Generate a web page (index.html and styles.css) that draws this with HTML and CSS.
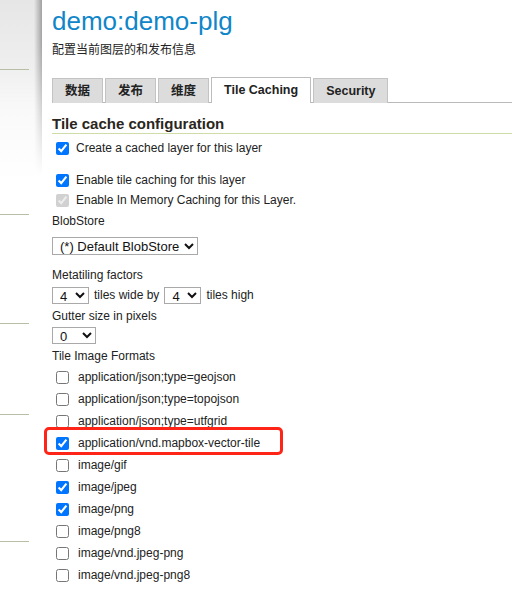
FILE: index.html
```html
<!DOCTYPE html>
<html lang="zh">
<head>
<meta charset="utf-8">
<title>demo:demo-plg</title>
<link rel="stylesheet" href="styles.css">
</head>
<body>
<div class="page">
  <aside class="sidebar">
    <div class="nav-group g1"></div>
    <div class="nav-group g2"></div>
    <div class="nav-group g3"></div>
    <div class="nav-group g4"></div>
    <div class="nav-group g5"></div>
  </aside>
  <main class="content">
    <h1 class="title">demo:demo-plg</h1>
    <p class="subtitle">配置当前图层的和发布信息</p>
    <ul class="tabs">
      <li class="tab">数据</li>
      <li class="tab">发布</li>
      <li class="tab">维度</li>
      <li class="tab active">Tile Caching</li>
      <li class="tab">Security</li>
    </ul>
    <h2 class="section-title">Tile cache configuration</h2>
    <div class="form">
      <label class="row r-create"><input type="checkbox" checked><span>Create a cached layer for this layer</span></label>
      <label class="row r-enable"><input type="checkbox" checked><span>Enable tile caching for this layer</span></label>
      <label class="row r-memory"><input type="checkbox" checked disabled><span>Enable In Memory Caching for this Layer.</span></label>
      <div class="row r-label">BlobStore</div>
      <div class="row r-blob">
        <select class="sel sel-blob"><option>(*) Default BlobStore</option></select>
      </div>
      <div class="row r-label r-meta">Metatiling factors</div>
      <div class="row r-factors">
        <select class="sel sel-meta"><option>4</option></select>
        <span class="inline-text">tiles wide by</span>
        <select class="sel sel-meta"><option>4</option></select>
        <span class="inline-text">tiles high</span>
      </div>
      <div class="row r-label">Gutter size in pixels</div>
      <div class="row r-gutter">
        <select class="sel sel-gutter"><option>0</option></select>
      </div>
      <div class="row r-label r-formats">Tile Image Formats</div>
      <ul class="formats">
        <li><label class="fmt"><input type="checkbox"><span>application/json;type=geojson</span></label></li>
        <li><label class="fmt"><input type="checkbox"><span>application/json;type=topojson</span></label></li>
        <li><label class="fmt"><input type="checkbox"><span>application/json;type=utfgrid</span></label></li>
        <li class="highlighted"><label class="fmt"><input type="checkbox" checked><span>application/vnd.mapbox-vector-tile</span></label><span class="highlight-box"></span></li>
        <li><label class="fmt"><input type="checkbox"><span>image/gif</span></label></li>
        <li><label class="fmt"><input type="checkbox" checked><span>image/jpeg</span></label></li>
        <li><label class="fmt"><input type="checkbox" checked><span>image/png</span></label></li>
        <li><label class="fmt"><input type="checkbox"><span>image/png8</span></label></li>
        <li><label class="fmt"><input type="checkbox"><span>image/vnd.jpeg-png</span></label></li>
        <li><label class="fmt"><input type="checkbox"><span>image/vnd.jpeg-png8</span></label></li>
      </ul>
    </div>
  </main>
</div>
</body>
</html>
```

FILE: styles.css
```css
html, body {
  margin: 0;
  padding: 0;
  background: #fff;
}

body {
  font-family: "Liberation Sans", "Noto Sans CJK SC", sans-serif;
  font-size: 12px;
  color: #222;
  width: 512px;
  height: 591px;
  overflow: hidden;
}

.page {
  display: flex;
  min-height: 591px;
}

/* ---------- sidebar ---------- */
.sidebar {
  position: relative;
  flex: none;
  width: 42px;
  background: linear-gradient(#e6e6e6 0, #efefef 69px, #f9f9f9 110px, #fff 180px);
}

.sidebar::after {
  content: "";
  position: absolute;
  top: 0;
  right: 0;
  width: 8px;
  height: 175px;
  background: linear-gradient(to right, rgba(0, 0, 0, 0), rgba(0, 0, 0, 0.3));
  -webkit-mask-image: linear-gradient(#000 25%, rgba(0, 0, 0, 0));
  mask-image: linear-gradient(#000 25%, rgba(0, 0, 0, 0));
}

.nav-group {
  width: 29px;
  border-bottom: 1px solid #b7c0a6;
}
.g1 { height: 69px; }
.g2 { height: 144px; }
.g3 { height: 108px; }
.g4 { height: 90px; }
.g5 { height: 126px; }

/* ---------- content ---------- */
.content {
  flex: 1;
  min-width: 0;
  padding-left: 10px;
}

.title {
  margin: 0;
  padding-top: 5px;
  font-size: 26px;
  line-height: 32px;
  font-weight: 400;
  color: #1086c9;
}

.subtitle {
  margin: 5px 0 0;
  font-size: 12px;
  line-height: 16px;
  color: #222;
}

.tabs {
  list-style: none;
  margin: 19px 0 0;
  padding: 0;
  display: flex;
  gap: 2px;
  height: 25px;
  border-bottom: 1px solid #b9b9b9;
}

.tab {
  height: 24px;
  margin-top: 1px;
  padding: 0 12px;
  border: 1px solid #c3c3c3;
  border-bottom: none;
  background: #dcdcdc;
  font-size: 12.5px;
  font-weight: 700;
  line-height: 24px;
  color: #222;
}

.tab.active {
  height: 25px;
  margin-top: 0;
  margin-bottom: -1px;
  background: #fff;
  border-color: #bdbdbd;
  line-height: 25px;
}

.section-title {
  margin: 12px 0 0;
  font-size: 15px;
  line-height: 18px;
  font-weight: 700;
  color: #2a2620;
  border-bottom: 1px solid #cddca9;
}

.form {
  padding-top: 4px;
}

.row {
  display: flex;
  align-items: center;
  height: 20px;
  color: #222;
}

.row input[type="checkbox"],
.fmt input[type="checkbox"] {
  width: 13px;
  height: 13px;
  margin: 0 7px 0 4px;
  flex: none;
}

.r-enable { margin-top: 12px; }
.r-label { margin-top: 1px; }
.r-blob { height: 30px; }
.r-meta { margin-top: 4px; }
.r-formats { margin-top: 2px; }
.r-gutter { height: 18px; }

.sel {
  box-sizing: border-box;
  height: 18px;
  margin: 0;
  padding: 0 0 0 3px;
  font-family: "Liberation Sans", sans-serif;
  font-size: 13px;
  color: #111;
  background: #fff;
  border: 1px solid #a9a9a9;
  border-radius: 0;
}

.sel-blob { width: 146px; }
.sel-meta { width: 37px; height: 17px; }
.sel-gutter { width: 44px; height: 17px; }

.inline-text {
  margin: 0 5px;
}

.formats {
  list-style: none;
  margin: 0;
  padding: 0;
}

.formats li {
  position: relative;
  height: 22px;
}

.fmt {
  display: flex;
  align-items: center;
  height: 22px;
}

.fmt input[type="checkbox"] {
  margin-right: 9px;
}

.highlight-box {
  position: absolute;
  left: -8px;
  top: -5px;
  width: 239px;
  height: 28px;
  box-sizing: border-box;
  border: 3px solid #ff2418;
  border-radius: 5px;
  pointer-events: none;
}
```
